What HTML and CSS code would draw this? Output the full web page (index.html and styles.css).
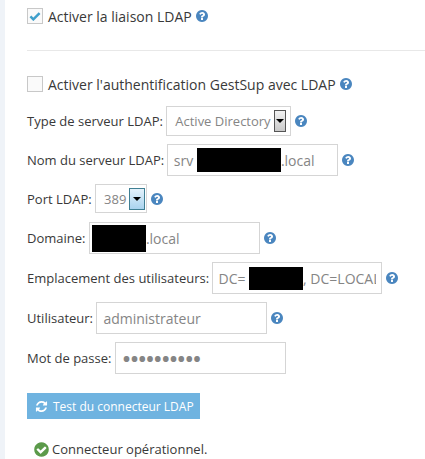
FILE: index.html
```html
<!DOCTYPE html>
<html lang="fr">
<head>
<meta charset="utf-8">
<title>LDAP</title>
<link rel="stylesheet" href="styles.css">
</head>
<body>
<svg class="defs" width="0" height="0" aria-hidden="true">
  <symbol id="q" viewBox="0 0 1792 1792"><path d="M1024 1376v-192q0-14-9-23t-23-9h-192q-14 0-23 9t-9 23v192q0 14 9 23t23 9h192q14 0 23-9t9-23zm256-672q0-88-55.500-163t-138.500-116-170-41q-243 0-371 213-15 24 8 42l132 100q7 6 19 6 16 0 25-12 53-68 86-92 34-24 86-24 48 0 85.500 26t37.500 59q0 38-20 61t-68 45q-63 28-115.500 86.500t-52.500 125.500v36q0 14 9 23t23 9h192q14 0 23-9t9-23q0-19 21.500-49.500t54.500-49.500q32-18 49-28.500t46-35 44.500-48 28-60.500 12.500-81zm384 192q0 209-103 385.500t-279.500 279.500-385.500 103-385.500-103-279.500-279.500-103-385.500 103-385.500 279.500-279.500 385.500-103 385.500 103 279.500 279.500 103 385.500z"/></symbol>
</svg>
<main class="page">
  <div class="check-row first">
    <span class="box"><svg class="tick" viewBox="0 0 14 12"><path d="M1.500 6.500 5 10 12.500 2.500" fill="none" stroke="#3f9fcb" stroke-width="3"/></svg></span>
    <span>Activer la liaison LDAP</span>
    <svg class="help"><use href="#q"/></svg>
  </div>
  <hr class="rule">
  <div class="check-row second">
    <span class="box"></span>
    <span>Activer l'authentification GestSup avec LDAP</span>
    <svg class="help"><use href="#q"/></svg>
  </div>

  <div class="row row-type">
    <span class="label">Type de serveur LDAP:</span>
    <div class="field select-type">Active Directory<span class="arrow"></span></div>
    <svg class="help"><use href="#q"/></svg>
  </div>
  <div class="row">
    <span class="label label-nom">Nom du serveur LDAP:</span>
    <div class="field input">srv <span class="mask mask-nom"></span>.local</div>
    <svg class="help"><use href="#q"/></svg>
  </div>
  <div class="row row-port">
    <span class="label">Port LDAP:</span>
    <div class="field select-port">389<span class="arrow arrow-focus"></span></div>
    <svg class="help"><use href="#q"/></svg>
  </div>
  <div class="row row-dom">
    <span class="label">Domaine:</span>
    <div class="field input input-dom"><span class="mask mask-dom"></span>.local</div>
    <svg class="help"><use href="#q"/></svg>
  </div>
  <div class="row">
    <span class="label">Emplacement des utilisateurs:</span>
    <div class="field input input-dc"><div class="clip">DC= <span class="mask mask-dc"></span>, DC=LOCAL</div></div>
    <svg class="help"><use href="#q"/></svg>
  </div>
  <div class="row">
    <span class="label">Utilisateur:</span>
    <div class="field input">administrateur</div>
    <svg class="help"><use href="#q"/></svg>
  </div>
  <div class="row">
    <span class="label">Mot de passe:</span>
    <div class="field input dots">••••••••••</div>
  </div>

  <button class="test" type="button">
    <svg class="refresh" viewBox="0 0 1792 1792"><path d="M1639 1056q0 5-1 7-64 268-268 434.500t-478 166.500q-146 0-282.500-55t-243.500-157l-129 129q-19 19-45 19t-45-19-19-45v-448q0-26 19-45t45-19h448q26 0 45 19t19 45-19 45l-137 137q71 66 161 102t187 36q134 0 250-65t186-179q11-17 53-117 8-23 30-23h192q13 0 22.500 9.500t9.500 22.500zm25-800v448q0 26-19 45t-45 19h-448q-26 0-45-19t-19-45 19-45l138-138q-148-137-349-137-134 0-250 65t-186 179q-11 17-53 117-8 23-30 23h-199q-13 0-22.500-9.500t-9.500-22.500v-7q65-268 270-434.500t480-166.500q146 0 284 55.500t245 156.500l130-129q19-19 45-19t45 19 19 45z"/></svg>
    Test du connecteur LDAP
  </button>

  <div class="status">
    <svg class="ok" viewBox="0 0 1792 1792"><path d="M1412 734q0-28-18-46l-91-90q-19-19-45-19t-45 19l-408 407-226-226q-19-19-45-19t-45 19l-91 90q-18 18-18 46 0 27 18 45l362 362q19 19 45 19 27 0 46-19l543-543q18-18 18-45zm252 162q0 209-103 385.500t-279.500 279.500-385.500 103-385.500-103-279.500-279.500-103-385.500 103-385.500 279.500-279.500 385.500-103 385.500 103 279.500 279.500 103 385.500z"/></svg>
    Connecteur opérationnel.
  </div>
</main>
</body>
</html>
```
FILE: styles.css
```css
html, body { margin: 0; padding: 0; background: #fff; }
body {
  width: 425px;
  height: 459px;
  overflow: hidden;
  font-family: "Open Sans", sans-serif;
  font-size: 13px;
  color: #393939;
}
.defs { position: absolute; }
.page {
  box-sizing: border-box;
  height: 459px;
  border-left: 5px solid #eff3f8;
  padding: 8px 0 0 22px;
}
.check-row {
  display: flex;
  align-items: center;
  height: 16px;
  font-size: 14px;
}
.box {
  box-sizing: border-box;
  width: 16px;
  height: 16px;
  border: 1px solid #c8c8c8;
  background: #fafafa;
  margin-right: 5px;
  display: flex;
  align-items: center;
  justify-content: center;
}
.tick { width: 12px; height: 10px; }
.help {
  width: 14px;
  height: 14px;
  margin-left: 3px;
  fill: #4a86bf;
  flex: none;
}
.rule {
  border: 0;
  border-top: 1px solid #e8e8e8;
  margin: 26px 0 25px;
}
.row {
  display: flex;
  align-items: center;
  height: 32px;
  margin-top: 8px;
}
.row-type { height: 30px; margin-top: 14px; }
.row-port { height: 29px; }
.row-dom { margin-top: 9px; }
.label { white-space: pre; margin-right: 3.4px; }
.label-nom { margin-right: 2.6px; }
.field {
  box-sizing: border-box;
  height: 100%;
  border: 1px solid #d5d5d5;
  color: #858585;
  font-size: 14px;
  display: flex;
  align-items: center;
  white-space: pre;
  overflow: hidden;
  flex: none;
}
.input { width: 171px; padding: 0 6px; }
.input-dom { padding-left: 2px; }
.input-dc { width: 170px; padding: 0 5px; }
.clip { display: flex; align-items: center; width: 100%; overflow: hidden; }
.dots { letter-spacing: 0.3px; font-size: 20px; font-weight: 700; padding-left: 7px; }
.select-type { width: 125px; padding-left: 8px; font-size: 13px; justify-content: space-between; padding-right: 4px; }
.select-port { width: 52px; padding-left: 8px; font-size: 13px; justify-content: space-between; padding-right: 0; }
.row .help { margin-left: 3px; }
.arrow {
  box-sizing: border-box;
  width: 12px;
  height: 22px;
  border: 1px solid #555;
  background: linear-gradient(#f2f2f2, #c9c9c9);
  position: relative;
  flex: none;
}
.arrow::after {
  content: "";
  position: absolute;
  left: 1px;
  top: 8px;
  border: 4px solid transparent;
  border-top: 4px solid #000;
  border-bottom: 0;
}
.arrow-focus {
  width: 16px;
  margin-right: 1px;
  border-color: #3f7f93;
  background: linear-gradient(#e4f2fb, #a9d3ee);
}
.arrow-focus::after { left: 3px; }
.mask { display: inline-block; background: #000; height: 27px; flex: none; }
.mask-nom { width: 84px; height: 24px; }
.mask-dom { width: 54px; }
.mask-dc { width: 54px; height: 23px; }
.test {
  display: flex;
  align-items: center;
  gap: 5px;
  box-sizing: border-box;
  width: 173px;
  height: 26px;
  margin-top: 19px;
  padding: 0 0 0 8px;
  border: 0;
  background: #6fb3e0;
  color: #fff;
  font-family: inherit;
  font-size: 12px;
}
.refresh { width: 13px; height: 13px; fill: #fff; flex: none; }
.status {
  display: flex;
  align-items: center;
  gap: 2px;
  margin: 21px 0 0 6px;
  height: 18px;
  font-size: 13px;
}
.ok { width: 17px; height: 17px; fill: #5b9a4a; flex: none; }
```
